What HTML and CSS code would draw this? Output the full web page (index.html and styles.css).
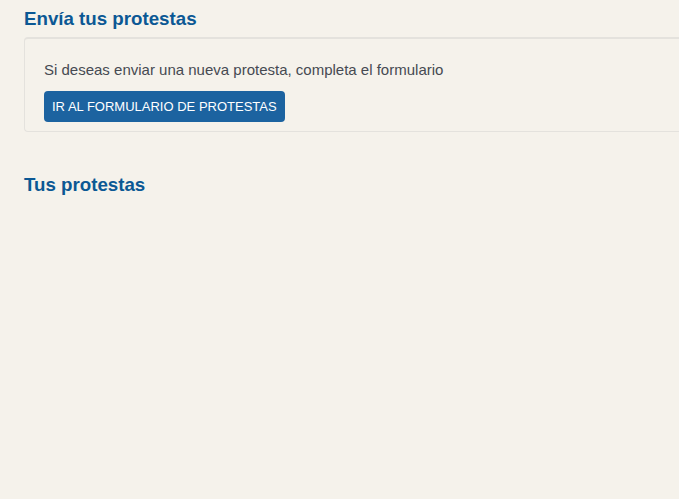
FILE: index.html
```html
<!DOCTYPE html>
<html lang="es">
<head>
    <meta charset="UTF-8">
    <meta name="viewport" content="width=device-width, initial-scale=1.0">
    <title>Protestas</title>
    <link rel="stylesheet" href="styles.css">
</head>
<body>
    <div class="page">
        <h3 class="section-title">Envía tus protestas</h3>
        <div class="card">
            <p class="card-text">Si deseas enviar una nueva protesta, completa el formulario</p>
            <button class="btn-primary">IR AL FORMULARIO DE PROTESTAS</button>
        </div>

        <h3 class="section-title second">Tus protestas</h3>
    </div>
</body>
</html>
```

FILE: styles.css
```css
body {
    font-family: Arial, "Liberation Sans", sans-serif;
    margin: 0;
    background-color: #f5f2eb;
}

.page {
    padding: 8px 0 0 24px;
}

.section-title {
    font-size: 18.72px;
    font-weight: bold;
    color: #0b5894;
    margin: 0 0 7px 0;
    line-height: 22px;
}

.section-title.second {
    margin-top: 42px;
}

.card {
    border: 1px solid #e4e2dd;
    border-top-width: 2px;
    border-right: none;
    border-radius: 4px 0 0 4px;
    padding: 22px 19px 9px 19px;
}

.card-text {
    font-size: 15px;
    color: #464a52;
    margin: 0 0 13px 0;
    line-height: 17px;
}

.btn-primary {
    font-family: Arial, "Liberation Sans", sans-serif;
    font-size: 13px;
    color: #fff;
    background-color: #1c63a0;
    border: none;
    border-radius: 4px;
    padding: 0 8px;
    height: 31px;
    cursor: pointer;
}
```
